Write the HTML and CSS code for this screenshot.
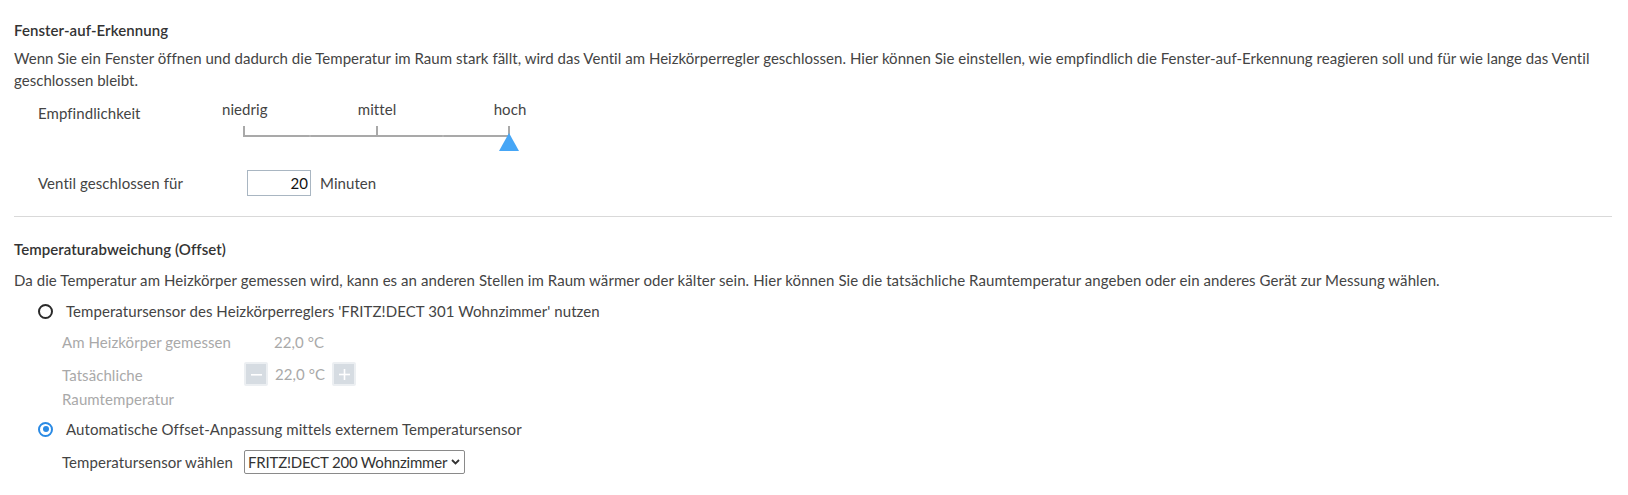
FILE: index.html
```html
<!DOCTYPE html>
<html lang="de">
<head>
<meta charset="utf-8">
<title>Fenster-auf-Erkennung</title>
<link rel="stylesheet" href="styles.css">
</head>
<body>
<main class="page">
  <section class="section section-window">
    <h3 class="title">Fenster-auf-Erkennung</h3>
    <p class="desc desc-first">Wenn Sie ein Fenster öffnen und dadurch die Temperatur im Raum stark fällt, wird das Ventil am Heizkörperregler geschlossen. Hier können Sie einstellen, wie empfindlich die Fenster-auf-Erkennung reagieren soll und für wie lange das Ventil geschlossen bleibt.</p>
    <div class="row row-slider">
      <span class="label">Empfindlichkeit</span>
      <div class="slider">
        <div class="slider-labels">
          <span class="tick-label">niedrig</span>
          <span class="tick-label">mittel</span>
          <span class="tick-label">hoch</span>
        </div>
        <svg class="slider-track" width="310" height="35" viewBox="0 0 310 35">
          <line x1="22" y1="16" x2="287" y2="16" stroke="#a9a9a9" stroke-width="2"/>
          <line x1="88" y1="15" x2="88" y2="17" stroke="#bdbdbd" stroke-width="1"/>
          <line x1="221" y1="15" x2="221" y2="17" stroke="#bdbdbd" stroke-width="1"/>
          <line x1="22" y1="6" x2="22" y2="17" stroke="#a9a9a9" stroke-width="2"/>
          <line x1="155" y1="6" x2="155" y2="17" stroke="#a9a9a9" stroke-width="2"/>
          <line x1="287" y1="6" x2="287" y2="17" stroke="#a9a9a9" stroke-width="2"/>
          <polygon points="287,13 297,31 277,31" fill="#46a6f6"/>
        </svg>
      </div>
    </div>
    <div class="row row-input">
      <span class="label">Ventil geschlossen für</span>
      <div class="field">
        <input class="num-input" type="text" value="20">
        <span class="unit">Minuten</span>
      </div>
    </div>
  </section>

  <hr class="divider">

  <section class="section section-offset">
    <h3 class="title">Temperaturabweichung (Offset)</h3>
    <p class="desc">Da die Temperatur am Heizkörper gemessen wird, kann es an anderen Stellen im Raum wärmer oder kälter sein. Hier können Sie die tatsächliche Raumtemperatur angeben oder ein anderes Gerät zur Messung wählen.</p>

    <label class="radio-row">
      <span class="radio"></span>
      <span class="radio-text">Temperatursensor des Heizkörperreglers 'FRITZ!DECT 301 Wohnzimmer' nutzen</span>
    </label>

    <div class="sub-row disabled">
      <span class="sub-label">Am Heizkörper gemessen</span>
      <span class="value value-plain">22,0 °C</span>
    </div>
    <div class="sub-row disabled sub-row-two">
      <span class="sub-label">Tatsächliche<br>Raumtemperatur</span>
      <div class="stepper">
        <span class="step-btn">
          <svg width="11" height="11" viewBox="0 0 11 11"><rect x="0" y="5" width="11" height="1.6" fill="#ffffff"/></svg>
        </span>
        <span class="value">22,0 °C</span>
        <span class="step-btn">
          <svg width="11" height="11" viewBox="0 0 11 11"><rect x="0" y="4.7" width="11" height="1.6" fill="#ffffff"/><rect x="4.7" y="0" width="1.6" height="11" fill="#ffffff"/></svg>
        </span>
      </div>
    </div>

    <label class="radio-row radio-row-2">
      <span class="radio checked"></span>
      <span class="radio-text">Automatische Offset-Anpassung mittels externem Temperatursensor</span>
    </label>

    <div class="sub-row select-row">
      <span class="sub-label sub-label-dark">Temperatursensor wählen</span>
      <span class="select-wrap">
        <select class="select">
          <option>FRITZ!DECT 200 Wohnzimmer</option>
        </select>
        <svg class="chevron" width="9" height="6" viewBox="0 0 9 6"><path d="M1 1 L4.5 4.5 L8 1" fill="none" stroke="#333" stroke-width="1.8"/></svg>
      </span>
    </div>
  </section>
</main>
</body>
</html>
```

FILE: styles.css
```css
* { box-sizing: border-box; }

html, body {
  margin: 0;
  padding: 0;
  background: #ffffff;
}

body {
  font-family: "Lato", "Open Sans", "Liberation Sans", sans-serif;
  font-size: 15px;
  line-height: 22px;
  letter-spacing: 0.07px;
  color: #444444;
}

.page {
  padding: 19px 16px 0 14px;
}

.title {
  margin: 0;
  font-size: 15px;
  font-weight: 600;
  line-height: 22px;
  color: #333333;
}

.desc {
  margin: 6px 0 0 0;
  line-height: 22px;
}

.desc-first {
  letter-spacing: 0.03px;
}

.row {
  display: grid;
  align-items: start;
  padding-left: 24px;
}

.row-slider {
  grid-template-columns: 184px auto;
  margin-top: 7px;
}

.row-slider .label {
  padding-top: 4px;
}

.slider {
  display: flex;
  flex-direction: column;
  width: 310px;
}

.slider-labels {
  display: flex;
  gap: 89px;
  height: 22px;
}

.tick-label {
  width: 44px;
  text-align: center;
  white-space: nowrap;
}

.slider-track {
  display: block;
}

.row-input {
  grid-template-columns: 209px auto;
  margin-top: 15px;
  align-items: center;
}

.field {
  display: flex;
  align-items: center;
}

.num-input {
  width: 64px;
  height: 26px;
  border: 1px solid #a9b6c2;
  border-radius: 0;
  padding: 0 2px 0 4px;
  font-family: inherit;
  font-size: 15px;
  color: #111111;
  text-align: right;
  background: #ffffff;
  outline: none;
}

.unit {
  margin-left: 9px;
}

.divider {
  margin: 20px 0 0 0;
  border: 0;
  border-top: 1px solid #d9d9d9;
  height: 0;
}

.section-offset {
  padding-top: 21px;
}

.section-offset .desc {
  margin-top: 9px;
}

.radio-row {
  display: flex;
  align-items: center;
  gap: 13px;
  padding-left: 24px;
  margin-top: 9px;
}

.radio-row-2 {
  margin-top: 7px;
}

.radio {
  width: 15px;
  height: 15px;
  border: 2px solid #2b2b2b;
  border-radius: 50%;
  background: #ffffff;
  flex: none;
  position: relative;
}

.radio.checked {
  border-color: #2a8ae4;
}

.radio.checked::after {
  content: "";
  position: absolute;
  left: 2.5px;
  top: 2.5px;
  width: 6px;
  height: 6px;
  border-radius: 50%;
  background: #2a8ae4;
}

.sub-row {
  display: grid;
  grid-template-columns: 182px auto;
  padding-left: 48px;
  margin-top: 9px;
  align-items: start;
}

.disabled {
  color: #a9a9a9;
}

.sub-row-two {
  margin-top: 10px;
  line-height: 24px;
}

.value-plain {
  padding-left: 30px;
}

.stepper {
  display: flex;
  align-items: center;
  gap: 7px;
  margin-top: -1px;
}

.step-btn {
  width: 24px;
  height: 24px;
  display: flex;
  align-items: center;
  justify-content: center;
  background: #d6dce2;
  border: 2px solid #eceff2;
  border-radius: 2px;
}

.step-btn svg { display: block; }

.select-row {
  margin-top: 10px;
  align-items: center;
  color: #444444;
}

.sub-label-dark {
  color: #444444;
}

.select-wrap {
  position: relative;
  display: inline-block;
  width: 221px;
  height: 24px;
}

.select {
  -webkit-appearance: none;
  appearance: none;
  width: 221px;
  height: 24px;
  border: 1px solid #8a8a8a;
  border-radius: 2px;
  background: #ffffff;
  padding: 0 14px 0 3px;
  font-family: inherit;
  font-size: 15px;
  letter-spacing: -0.2px;
  color: #333333;
  line-height: 22px;
}

.chevron {
  position: absolute;
  right: 5px;
  top: 9px;
  pointer-events: none;
}
```
